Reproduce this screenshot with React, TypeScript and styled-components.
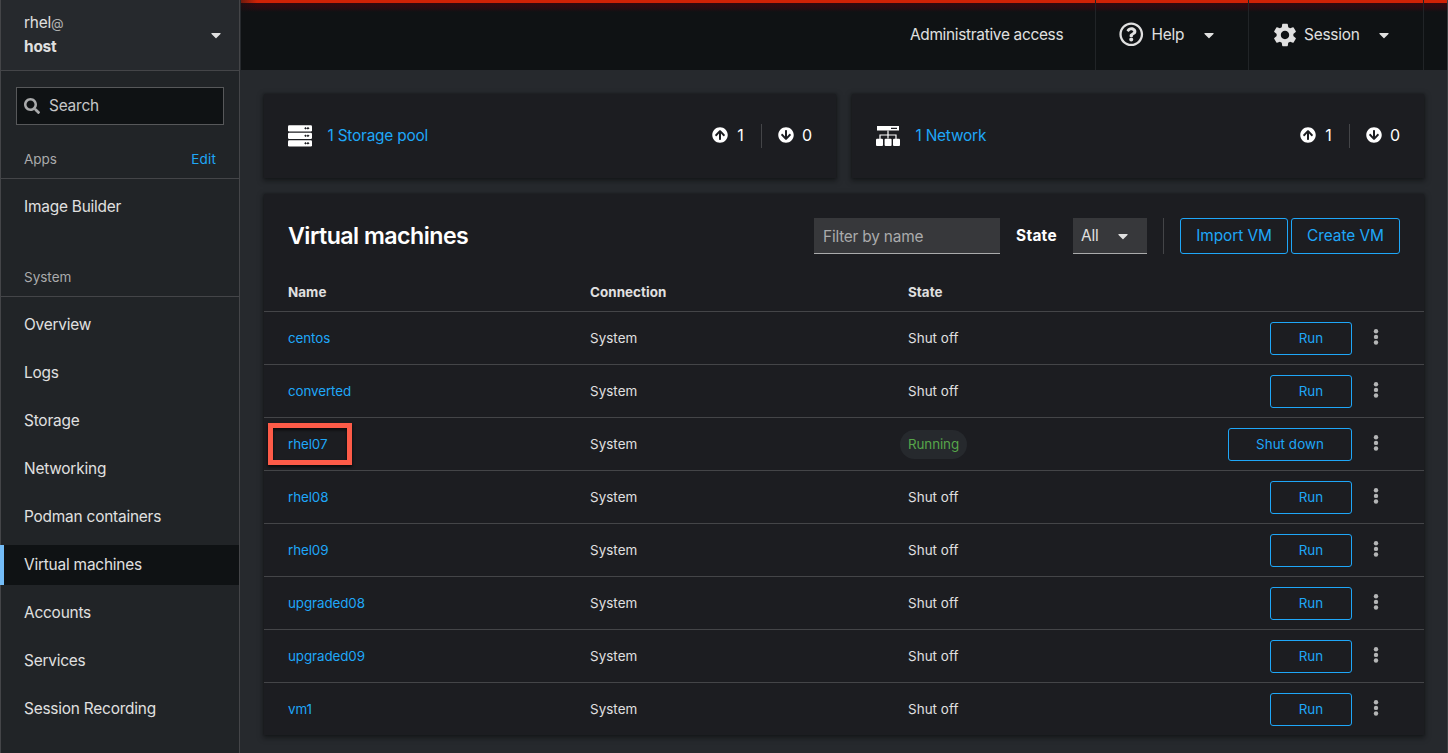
import React from "react";
import styled, { createGlobalStyle } from "styled-components";
import { FaSearch, FaCaretDown, FaArrowCircleUp, FaArrowCircleDown, FaRegQuestionCircle } from "react-icons/fa";
import { MdSettings } from "react-icons/md";

const Global = createGlobalStyle`
  * { box-sizing: border-box; }
  body { margin: 0; background: #26292d; color: #e0e0e0; font: 15.4px/24px "Inter", "Liberation Sans", sans-serif; letter-spacing: -0.2px; }
  button, input { font: inherit; color: inherit; letter-spacing: inherit; background: none; border: 0; margin: 0; padding: 0; }
  a { color: #1fa7f8; text-decoration: none; }
  svg { display: block; flex: none; }
`;
const Page = styled.div`display: flex; width: 1448px; height: 753px; overflow: hidden; border-right: 1px solid #3c3f42;`;
const Sidebar = styled.nav`width: 240px; flex: none; background: #212427; border: solid #444548; border-width: 0 1px;`;
const HostSwitcher = styled.div`height: 71px; display: flex; align-items: center; justify-content: space-between; padding: 0 15px 0 23px; background: #26292d; border-bottom: 1px solid #444548;`;
const At = styled.span`font-size: 13px; color: #b0b0b0;`;
const HostName = styled.div`font-weight: 700;`;
const Search = styled.label`margin: 16px 15px 0; height: 38px; display: flex; align-items: center; gap: 9px; padding: 0 7px; border: 1px solid #57585a; background: #0f1214; color: #aaabac;`;
const SearchText = styled.span`color: #c6c7c8;`;
const GroupHead = styled.div<{ $top: number }>`margin-top: ${p => p.$top}px; height: 32px; padding: 0 23px; display: flex; justify-content: space-between; line-height: 24px; font-size: 13.5px; letter-spacing: 0; color: #aaabac; border-bottom: 1px solid #444548;`;
const EditLink = styled.a`letter-spacing: .2px;`;
const NavItem = styled.a<{ $on?: boolean }>`
  display: block; height: 40px; margin: 8px 0; padding-left: 23px; line-height: 39px; color: #e0e0e0;
  ${p => p.$on && "background: #0f1214; margin-left: -1px; padding-left: 20px; border-left: 4px solid #73bcf7;"}
`;
const Main = styled.main`flex: 1; min-width: 0; padding-left: 1px;`;
const Header = styled.header`
  height: 70px; display: flex; justify-content: flex-end; padding-right: 23px;
  background: linear-gradient(90deg, rgba(15,18,20,.5) 0, transparent 16px) 0 0 / 100% 12px no-repeat,
    linear-gradient(#cf2206 0 3px, #34090f 3px, #280b11 8px, #0f1214 12px) 0 0 / 100% 12px no-repeat, #0f1214;
`;
const HeaderItem = styled.div<{ $w: number; $gap: number; $pad: number }>`
  width: ${p => p.$w}px; padding: 0 0 1px ${p => p.$pad}px; display: flex; align-items: center; gap: ${p => p.$gap}px;
  border-right: 1px solid #212427; white-space: nowrap;
`;
const AccessText = styled.span`letter-spacing: -.3px;`;
const Caret = styled(FaCaretDown)<{ $left?: number }>`margin-left: ${p => p.$left || 0}px; font-size: 16px;`;
const Content = styled.div`padding: 24px 23px 0; display: grid; gap: 16px;`;
const Cards = styled.div`display: grid; grid-template-columns: 1fr 1fr; gap: 16px;`;
const Panel = styled.section`background: #1c1d21; box-shadow: 0 2px 5px 1px rgba(8,9,10,.5), 0 0 2px rgba(8,9,10,.3);`;
const Card = styled(Panel)`height: 84px; padding: 0 24px; display: flex; align-items: center; gap: 16px; color: #fff;`;
const CardLink = styled.a`margin: 0 auto 0 -.5px; padding-bottom: 1px;`;
const Count = styled.span`display: flex; align-items: center; gap: 8px; padding-bottom: 2px; font-size: 16px;`;
const Digit = styled.span`min-width: 9.5px; text-align: center;`;
const Rule = styled.i<{ $h: number }>`width: 1px; height: ${p => p.$h}px; background: #444548;`;
const VmPanel = styled(Panel)`height: 541px;`;
const Toolbar = styled.div`height: 84px; padding: 0 24px; display: flex; align-items: center; gap: 16px;`;
const ToolbarButtons = styled.div`display: flex; gap: 3px; letter-spacing: -.05px;`;
const Title = styled.h2`margin: 0 auto 0 0; font-size: 23.2px; font-weight: 600; color: #fff; letter-spacing: -.53px;`;
const Filter = styled.input`width: 186px; height: 36px; padding: 2px 9px 0; background: #37383b; border-bottom: 1px solid #aaabac; &::placeholder { color: #aaabac; opacity: 1; }`;
const StateLabel = styled.b`width: 41px; color: #fff; letter-spacing: .3px;`;
const Select = styled.button`width: 74px; height: 36px; padding: 0 16px 0 8px; display: flex; justify-content: space-between; align-items: center; background: #37383b; border-bottom: 1px solid #aaabac;`;
const Button = styled.button<{ $w: number; $small?: boolean }>`
  width: ${p => p.$w}px; height: ${p => (p.$small ? 33 : 36)}px; border: 1px solid #1fa7f8; border-radius: 3px;
  color: #1fa7f8; font-size: ${p => (p.$small ? 13.4 : 15.4)}px; white-space: nowrap;
`;
const Row = styled.div<{ $head?: boolean }>`
  height: ${p => (p.$head ? 33 : 53)}px; padding-left: 24px; letter-spacing: .06px;
  display: grid; grid-template-columns: 302px 318px 1fr auto; align-items: ${p => (p.$head ? "start" : "center")};
  font-size: 13.4px; font-weight: ${p => (p.$head ? 700 : 400)}; line-height: 28px;
  & + & { border-top: 1px solid #444548; }
`;
const NameCell = styled.span`position: relative; letter-spacing: -.1px;`;
const Highlight = styled.span`position: absolute; left: -20px; top: -7px; width: 84px; height: 42px; border: 5px solid #fd5b48; box-shadow: 0 2px 3px rgba(0,0,0,.7), inset 0 2px 3px rgba(0,0,0,.7); pointer-events: none;`;
const Badge = styled.span`display: inline-block; margin-left: -8px; padding: 0 8px; height: 29px; border-radius: 15px; background: #26292d; color: #57a64a; letter-spacing: -.1px;`;
const Actions = styled.span`display: flex; align-items: center; gap: 16px; padding-right: 40px; color: #b4b5b6;`;

const Kebab = () => (
  <svg width="16" height="18" viewBox="0 0 16 18" fill="currentColor">
    {[2.3, 7.9, 13.5].map(y => <circle key={y} cx="8" cy={y} r="2.2" />)}
  </svg>
);
const StorageIcon = () => (
  <svg width="24" height="22" viewBox="0 0 24 22" fill="#fff">
    {[0, 7.5, 15].map(y => (
      <g key={y}>
        <rect y={y + .2} width="24" height="6.3" rx="1.2" />
        <path d={`M16.2 ${y + 3.3}l1.3-1.2 1.2 1.1 1.2-1.1 1.7 1.2-1.7 1.2-1.2-1.1-1.2 1.1z`} fill="#1c1d21" />
      </g>
    ))}
  </svg>
);
const NetworkIcon = () => (
  <svg width="24" height="20" viewBox="0 0 24 20" fill="#fff">
    <path fillRule="evenodd" d="M1 0h22v4.6H1zM15 1.8v1.2h6V1.8z" />
    <path d="M12 4.6v8M4 13V9h16v4" fill="none" stroke="#fff" strokeWidth="1.2" />
    {[0, 8.6, 17].map(x => <rect key={x} x={x} y="12.8" width="7" height="7.2" rx="1" />)}
  </svg>
);

const vms: [string, boolean?][] = [["centos"], ["converted"], ["rhel07", true], ["rhel08"], ["rhel09"], ["upgraded08"], ["upgraded09"], ["vm1"]];
const system = ["Overview", "Logs", "Storage", "Networking", "Podman containers", "Virtual machines", "Accounts", "Services", "Session Recording"];

const SummaryCard = ({ icon, label }: { icon: React.ReactNode; label: string }) => (
  <Card>
    {icon}
    <CardLink href="#">{label}</CardLink>
    <Count><FaArrowCircleUp size={16} /><Digit>1</Digit></Count>
    <Rule $h={24} />
    <Count><FaArrowCircleDown size={16} /><Digit>0</Digit></Count>
  </Card>
);

export default function App() {
  return (
    <>
      <Global />
      <Page>
        <Sidebar>
          <HostSwitcher>
            <div><div>rhel<At>@</At></div><HostName>host</HostName></div>
            <Caret />
          </HostSwitcher>
          <Search><FaSearch size={16} /><SearchText>Search</SearchText></Search>
          <GroupHead $top={22}><span>Apps</span><EditLink href="#">Edit</EditLink></GroupHead>
          <NavItem>Image Builder</NavItem>
          <GroupHead $top={38}><span>System</span></GroupHead>
          {system.map(s => <NavItem key={s} $on={s === "Virtual machines"}>{s}</NavItem>)}
        </Sidebar>
        <Main>
          <Header>
            <HeaderItem $w={186} $gap={0} $pad={0}><AccessText>Administrative access</AccessText></HeaderItem>
            <HeaderItem $w={153} $gap={8} $pad={23}><FaRegQuestionCircle size={24.5} />Help<Caret $left={9} /></HeaderItem>
            <HeaderItem $w={175} $gap={5} $pad={22}><MdSettings size={28} />Session<Caret $left={11} /></HeaderItem>
          </Header>
          <Content>
            <Cards>
              <SummaryCard icon={<StorageIcon />} label="1 Storage pool" />
              <SummaryCard icon={<NetworkIcon />} label="1 Network" />
            </Cards>
            <VmPanel>
              <Toolbar>
                <Title>Virtual machines</Title>
                <Filter placeholder="Filter by name" />
                <StateLabel>State</StateLabel>
                <Select>All<Caret /></Select>
                <Rule $h={36} />
                <ToolbarButtons>
                  <Button $w={108}>Import VM</Button>
                  <Button $w={109}>Create VM</Button>
                </ToolbarButtons>
              </Toolbar>
              <Row $head><span>Name</span><span>Connection</span><span>State</span></Row>
              {vms.map(([name, running]) => (
                <Row key={name}>
                  <NameCell><a href="#">{name}</a>{running && <Highlight />}</NameCell>
                  <span>System</span>
                  <span>{running ? <Badge>Running</Badge> : "Shut off"}</span>
                  <Actions>
                    <Button $small $w={running ? 124 : 82}>{running ? "Shut down" : "Run"}</Button>
                    <Kebab />
                  </Actions>
                </Row>
              ))}
            </VmPanel>
          </Content>
        </Main>
      </Page>
    </>
  );
}
